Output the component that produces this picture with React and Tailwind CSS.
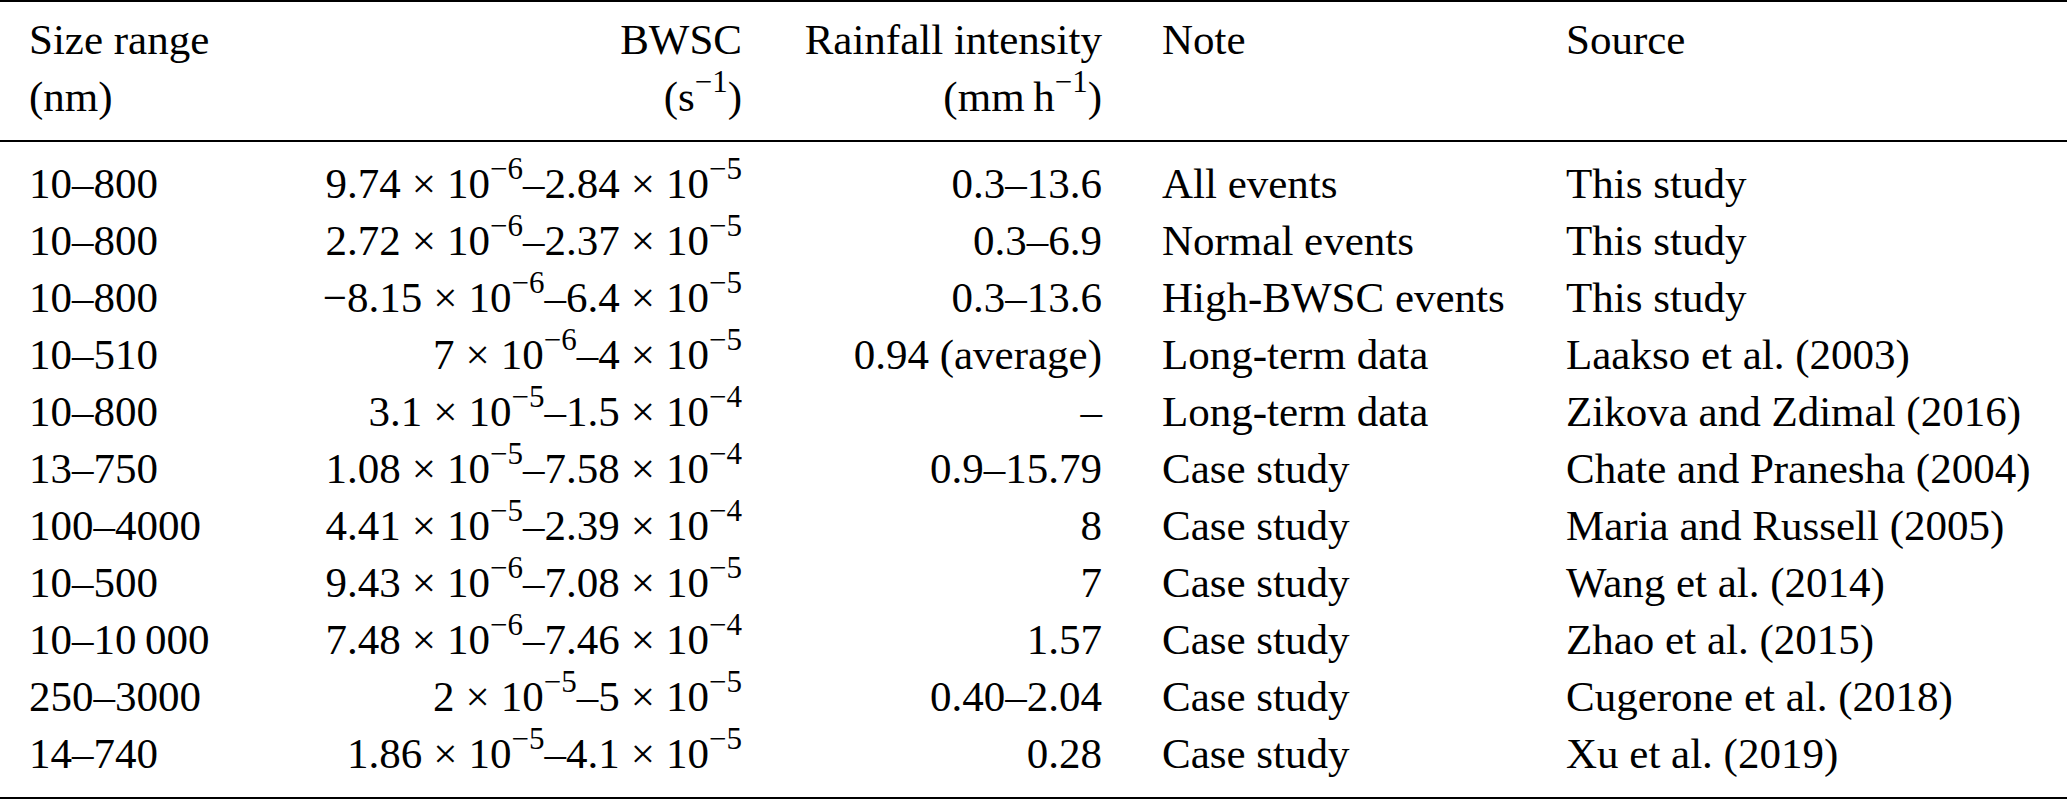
import React from "react";

const rows = [
  ["10–800", "9.74", "6", "2.84", "5", "0.3–13.6", "All events", "This study"],
  ["10–800", "2.72", "6", "2.37", "5", "0.3–6.9", "Normal events", "This study"],
  ["10–800", "−8.15", "6", "6.4", "5", "0.3–13.6", "High-BWSC events", "This study"],
  ["10–510", "7", "6", "4", "5", "0.94 (average)", "Long-term data", "Laakso et al. (2003)"],
  ["10–800", "3.1", "5", "1.5", "4", "–", "Long-term data", "Zikova and Zdimal (2016)"],
  ["13–750", "1.08", "5", "7.58", "4", "0.9–15.79", "Case study", "Chate and Pranesha (2004)"],
  ["100–4000", "4.41", "5", "2.39", "4", "8", "Case study", "Maria and Russell (2005)"],
  ["10–500", "9.43", "6", "7.08", "5", "7", "Case study", "Wang et al. (2014)"],
  ["10–10\u2009000", "7.48", "6", "7.46", "4", "1.57", "Case study", "Zhao et al. (2015)"],
  ["250–3000", "2", "5", "5", "5", "0.40–2.04", "Case study", "Cugerone et al. (2018)"],
  ["14–740", "1.86", "5", "4.1", "5", "0.28", "Case study", "Xu et al. (2019)"],
];

function Sup({ children }) {
  return <span className="relative -top-[0.6em] text-[31px] leading-none">{children}</span>;
}

function Times() {
  return <span className="mx-[11px]">×</span>;
}

export default function App() {
  return (
    <div className="w-[2067px] h-[799px] bg-white overflow-hidden text-black text-[43px] leading-[57px] font-[Tinos,Liberation_Serif,Times_New_Roman,DejaVu_Serif,serif]">
      <div className="h-[2px] bg-black" />
      <div className="flex pl-[29px] pt-[9px] pb-[15px]">
        <div className="w-[200px]">
          <p>Size range</p>
          <p>(nm)</p>
        </div>
        <div className="w-[513px] text-right">
          <p>BWSC</p>
          <p>
            (s<Sup>−1</Sup>)
          </p>
        </div>
        <div className="w-[360px] text-right">
          <p>Rainfall intensity</p>
          <p>
            (mm{"\u2009"}h<Sup>−1</Sup>)
          </p>
        </div>
        <div className="w-[60px]" />
        <p className="w-[404px]">Note</p>
        <p>Source</p>
      </div>
      <div className="h-[2px] bg-black" />
      <div className="pt-[13px]">
        {rows.map((r, i) => (
          <div key={i} className="flex pl-[29px] whitespace-nowrap">
            <p className="w-[200px]">{r[0]}</p>
            <p className="w-[513px] text-right">
              {r[1]}
              <Times />
              10<Sup>−{r[2]}</Sup>–{r[3]}
              <Times />
              10<Sup>−{r[4]}</Sup>
            </p>
            <p className="w-[360px] text-right">{r[5]}</p>
            <div className="w-[60px]" />
            <p className="w-[404px]">{r[6]}</p>
            <p>{r[7]}</p>
          </div>
        ))}
      </div>
      <div className="mt-[15px] h-[2px] bg-black" />
    </div>
  );
}
